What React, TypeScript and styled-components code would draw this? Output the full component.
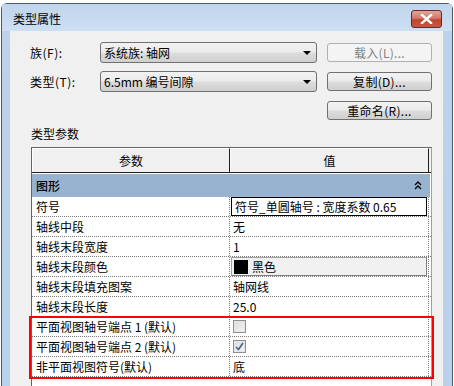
import React from "react";
import styled, { createGlobalStyle } from "styled-components";

const Global = createGlobalStyle`
  html, body { margin: 0; padding: 0; background: #ffffff; overflow: hidden; }
  body { font-family: "Noto Sans CJK SC", "DejaVu Sans", sans-serif; font-size: 12px; color: #000; }
`;

const Window = styled.div`
  margin: 3px 1px 0 1px;
  height: 420px;
  display: flex;
  flex-direction: column;
  border: 1px solid #4a5a70;
  border-bottom: none;
  border-radius: 6px 6px 0 0;
  background: linear-gradient(180deg, #c3d7ed 0px, #bcd2ea 30px, #b9d1ea 100%);
  padding: 0 9px 0 8px;
`;

const TitleBar = styled.div`
  height: 27px;
  display: flex;
  align-items: flex-start;
  justify-content: space-between;
  background: linear-gradient(180deg, #c0d5ec 0%, #cddff2 100%);
  margin: 0 -9px 0 -8px;
  padding: 0 10px 0 11px;
`;

const Title = styled.div`
  font-size: 12px;
  line-height: 12px;
  margin-top: 9px;
  color: #000;
`;

const CloseBtn = styled.div`
  width: 31px;
  height: 18px;
  margin-top: 6px;
  box-sizing: border-box;
  border: 1px solid #5e2a2a;
  border-radius: 3px;
  background: linear-gradient(180deg, #e3a596 0%, #d2796a 45%, #c0452f 55%, #c7583f 100%);
  display: flex;
  align-items: center;
  justify-content: center;
`;

const Content = styled.div`
  flex: 1;
  background: #f0f0f0;
  padding: 11px 0 0 20px;
  display: flex;
  flex-direction: column;
`;

const TopGrid = styled.div`
  display: grid;
  grid-template-columns: 60px 217px 105px;
  grid-auto-rows: 21px;
  column-gap: 10px;
  row-gap: 8px;
  align-items: center;
`;

const Label = styled.div`
  font-size: 12px;
  line-height: 21px;
  letter-spacing: 0.5px;
`;

const Combo = styled.div`
  height: 21px;
  box-sizing: border-box;
  border: 1px solid #707070;
  border-radius: 3px;
  background: linear-gradient(180deg, #f2f2f2 0%, #ebebeb 48%, #dddddd 52%, #cfcfcf 100%);
  display: flex;
  align-items: center;
  justify-content: space-between;
  padding: 0 3px 0 3px;
  font-size: 12px;
`;

const Arrow = styled.span`
  width: 0;
  height: 0;
  border-left: 4px solid transparent;
  border-right: 4px solid transparent;
  border-top: 4px solid #000;
  margin-right: 2px;
  margin-top: 1px;
`;

const Button = styled.div<{ $disabled?: boolean }>`
  height: 19px;
  box-sizing: border-box;
  border: 1px solid ${(p) => (p.$disabled ? "#adb2b5" : "#707070")};
  border-radius: 3px;
  background: ${(p) =>
    p.$disabled
      ? "#f4f4f4"
      : "linear-gradient(180deg, #f2f2f2 0%, #ebebeb 48%, #dddddd 52%, #cfcfcf 100%)"};
  color: ${(p) => (p.$disabled ? "#838383" : "#000")};
  display: flex;
  align-items: center;
  justify-content: center;
  font-size: 12px;
  letter-spacing: 0.3px;
`;

const SectionLabel = styled.div`
  margin: 6px 0 0 1px;
  height: 20px;
  line-height: 14px;
  font-size: 12px;
`;

const Table = styled.div`
  margin-left: 1px;
  width: 399px;
  flex: 1;
  background: #ffffff;
  border-left: 1px solid #646464;
  border-top: 1px solid #646464;
  border-right: 1px solid #a0a0a0;
  display: flex;
  flex-direction: column;
`;

const HeaderRow = styled.div`
  display: grid;
  grid-template-columns: 198px 199px;
  height: 25px;
  box-sizing: border-box;
  border-bottom: 1px solid #1e1e1e;
  background: #f0f0f0;
`;

const HeaderCell = styled.div`
  border-top: 1px solid #ffffff;
  border-left: 1px solid #ffffff;
  border-right: 1px solid #1e1e1e;
  display: flex;
  align-items: center;
  justify-content: center;
  font-size: 12px;
`;

const GroupRow = styled.div`
  margin-top: 1px;
  height: 23px;
  background: #98b3cf;
  display: flex;
  align-items: center;
  justify-content: space-between;
  padding: 0 8px 0 4px;
  font-size: 12px;
  font-weight: 500;
  margin-right: 1px;
`;

const Row = styled.div`
  display: grid;
  grid-template-columns: 198px 199px;
  height: 20px;
  box-sizing: border-box;
  border-bottom: 1px dotted #7a7a7a;
`;

const NameCell = styled.div`
  border-right: 1px dotted #7a7a7a;
  padding-left: 4px;
  display: flex;
  align-items: center;
  font-size: 12px;
  white-space: nowrap;
`;

const ValueCell = styled.div`
  border-right: 1px dotted #7a7a7a;
  padding-left: 3px;
  display: flex;
  align-items: center;
  font-size: 12px;
  white-space: nowrap;
`;

const BoxedValue = styled.div`
  margin: 0 1px 0 -2px;
  flex: 1;
  align-self: stretch;
  box-sizing: border-box;
  border: 1px solid #000;
  padding-left: 3px;
  display: flex;
  align-items: center;
  background: #fff;
`;

const ColorValue = styled.div`
  margin: 0 1px 0 -2px;
  flex: 1;
  align-self: stretch;
  box-sizing: border-box;
  border: 1px solid #a0a0a0;
  border-right-color: #808080;
  border-bottom-color: #808080;
  background: #f0f0f0;
  padding-left: 2px;
  display: flex;
  align-items: center;
  gap: 4px;
`;

const Swatch = styled.span`
  width: 14px;
  height: 14px;
  background: #000;
`;

const Check = styled.span`
  width: 13px;
  height: 13px;
  box-sizing: border-box;
  border: 1px solid #8f8f8f;
  background: linear-gradient(135deg, #dcdcdc 0%, #f4f4f4 100%);
  display: flex;
  align-items: center;
  justify-content: center;
  box-shadow: inset 0 0 0 1px #e6e6e6;
`;

const Highlight = styled.div`
  position: relative;
  &::after {
    content: "";
    position: absolute;
    top: -1px;
    bottom: -2px;
    left: -3px;
    right: -3px;
    border: 2px solid #ff0000;
    pointer-events: none;
  }
`;

const rows: { name: string; value: React.ReactNode }[] = [
  { name: "轴线中段", value: "无" },
  { name: "轴线末段宽度", value: "1" },
];

export default function App() {
  return (
    <>
      <Global />
      <Window>
        <TitleBar>
          <Title>类型属性</Title>
          <CloseBtn>
            <svg width="13" height="10" viewBox="0 0 13 10">
              <path d="M2 1 L11 9 M11 1 L2 9" stroke="#ffffff" strokeWidth="2.4" strokeLinecap="square" />
            </svg>
          </CloseBtn>
        </TitleBar>
        <Content>
          <TopGrid>
            <Label>族(F):</Label>
            <Combo>
              <span>系统族: 轴网</span>
              <Arrow />
            </Combo>
            <Button $disabled>载入(L)...</Button>
            <Label>类型(T):</Label>
            <Combo>
              <span>6.5mm 编号间隙</span>
              <Arrow />
            </Combo>
            <Button>复制(D)...</Button>
            <span />
            <span />
            <Button>重命名(R)...</Button>
          </TopGrid>
          <SectionLabel>类型参数</SectionLabel>
          <Table>
            <HeaderRow>
              <HeaderCell>参数</HeaderCell>
              <HeaderCell>值</HeaderCell>
            </HeaderRow>
            <GroupRow>
              <span>图形</span>
              <svg width="8" height="9" viewBox="0 0 8 9">
                <path d="M1 4 L4 1 L7 4 M1 8 L4 5 L7 8" stroke="#000" strokeWidth="1.3" fill="none" />
              </svg>
            </GroupRow>
            <Row>
              <NameCell>符号</NameCell>
              <ValueCell>
                <BoxedValue>符号_单圆轴号 : 宽度系数 0.65</BoxedValue>
              </ValueCell>
            </Row>
            {rows.map((r) => (
              <Row key={r.name}>
                <NameCell>{r.name}</NameCell>
                <ValueCell>{r.value}</ValueCell>
              </Row>
            ))}
            <Row>
              <NameCell>轴线末段颜色</NameCell>
              <ValueCell>
                <ColorValue>
                  <Swatch />
                  <span>黑色</span>
                </ColorValue>
              </ValueCell>
            </Row>
            <Row>
              <NameCell>轴线末段填充图案</NameCell>
              <ValueCell>轴网线</ValueCell>
            </Row>
            <Row>
              <NameCell>轴线末段长度</NameCell>
              <ValueCell>25.0</ValueCell>
            </Row>
            <Highlight>
              <Row>
                <NameCell>平面视图轴号端点 1 (默认)</NameCell>
                <ValueCell>
                  <Check />
                </ValueCell>
              </Row>
              <Row>
                <NameCell>平面视图轴号端点 2 (默认)</NameCell>
                <ValueCell>
                  <Check>
                    <svg width="9" height="9" viewBox="0 0 9 9">
                      <path d="M1 5 L3.5 7.5 L8 1" stroke="#4a5f8a" strokeWidth="1.6" fill="none" />
                    </svg>
                  </Check>
                </ValueCell>
              </Row>
              <Row>
                <NameCell>非平面视图符号(默认)</NameCell>
                <ValueCell>底</ValueCell>
              </Row>
            </Highlight>
          </Table>
        </Content>
      </Window>
    </>
  );
}
